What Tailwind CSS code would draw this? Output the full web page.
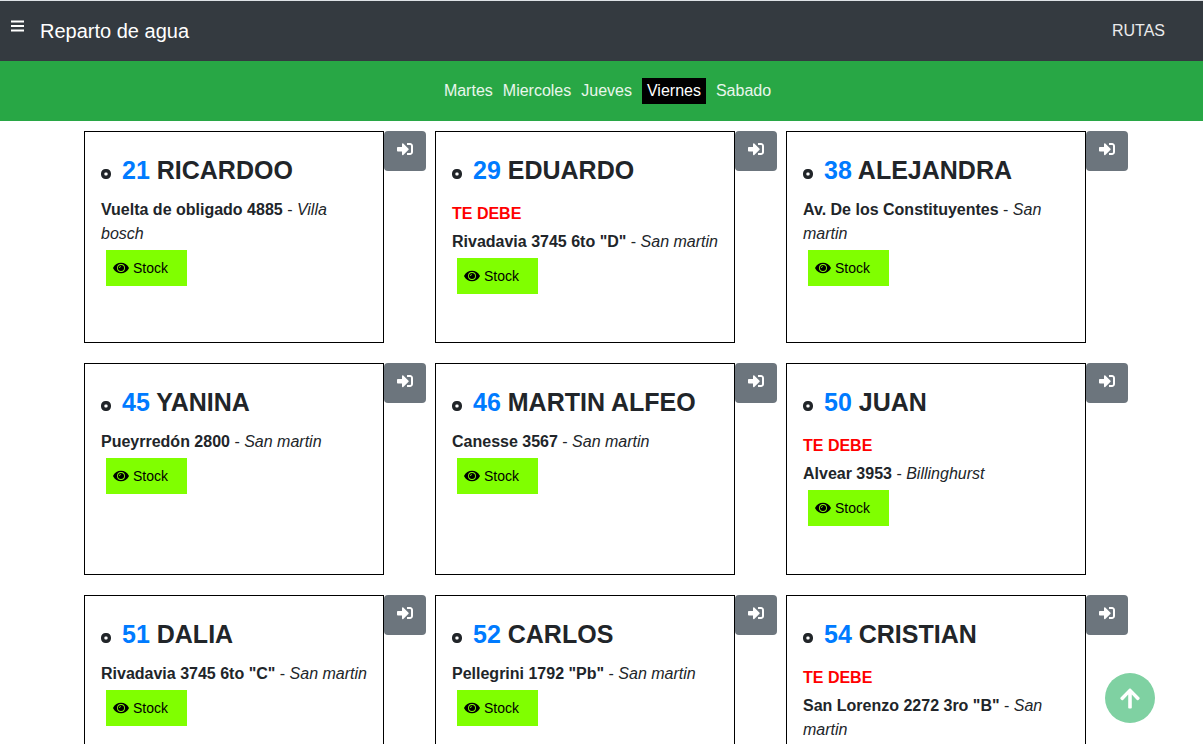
<!DOCTYPE html>
<html lang="es">
<head>
<meta charset="utf-8">
<meta name="viewport" content="width=device-width, initial-scale=1">
<title>Reparto de agua</title>
<script src="https://cdn.jsdelivr.net/npm/@tailwindcss/browser@4"></script>
</head>
<body class="bg-white font-['Liberation_Sans',Arial,sans-serif] text-base text-[#212529]">
<svg class="hidden" aria-hidden="true">
  <symbol id="enter" viewBox="0 0 512 512"><path d="M416 448h-84c-6.6 0-12-5.4-12-12v-40c0-6.6 5.4-12 12-12h84c17.7 0 32-14.3 32-32V160c0-17.7-14.3-32-32-32h-84c-6.6 0-12-5.4-12-12V76c0-6.6 5.4-12 12-12h84c53 0 96 43 96 96v192c0 53-43 96-96 96zm-47-201L201 79c-15-15-41-4.5-41 17v96H24c-13.3 0-24 10.7-24 24v96c0 13.3 10.7 24 24 24h136v96c0 21.5 26 32 41 17l168-168c9.3-9.4 9.3-24.6 0-34z"/></symbol>
  <symbol id="eye" viewBox="0 0 576 512"><path fill-rule="evenodd" d="M572.5 241.4C518.3 135.600 410.900 64 288 64S57.700 135.600 3.500 241.400a32 32 0 0 0 0 29.200C57.700 376.400 165 448 288 448s230.300-71.600 284.500-177.400a32 32 0 0 0 0-29.200zM288 400a144 144 0 1 1 0-288 144 144 0 0 1 0 288zm0-32a112 112 0 1 0 0-224 112 112 0 0 0 0 224zm-72-108a72 72 0 0 1 72-72v30a42 42 0 0 0-42 42z"/></symbol>
  <symbol id="dot" viewBox="0 0 10 10"><rect x="1.700" y="1.700" width="6.600" height="6.600" rx="2.800" fill="none" stroke="currentColor" stroke-width="3.400"/></symbol>
</svg>
<header class="flex h-[61px] items-center border-t border-[#dee2e6] bg-[#343a40] pr-[38px] pl-[11px] text-white">
  <button type="button" aria-label="Menú" class="mr-4 mb-[10px]">
    <svg class="block h-3 w-[13px]" viewBox="0 0 13 12" fill="none" stroke="currentColor" stroke-width="2"><path d="M0 1.500h13M0 6h13M0 10.500h13"/></svg>
  </button>
  <a href="#" class="text-xl">Reparto de agua</a>
  <a href="#rutas" class="ml-auto text-white/90">RUTAS</a>
</header>
<nav aria-label="Días" class="flex h-[60px] items-center justify-center bg-[#28a745] pl-3 text-white/90">
  <a href="#martes" class="px-[5px]">Martes</a>
  <a href="#miercoles" class="px-[5px]">Miercoles</a>
  <a href="#jueves" class="px-[5px]">Jueves</a>
  <a href="#viernes" aria-current="page" class="mx-[5px] bg-black px-[5px] py-px text-white">Viernes</a>
  <a href="#sabado" class="px-[5px]">Sabado</a>
</nav>
<main id="clients" class="flex flex-wrap justify-center gap-x-[9px] gap-y-5 pt-[10px] pb-5 pl-[9px]"></main>
<a href="#" aria-label="Volver arriba" class="fixed right-12 bottom-[21px] flex size-[50px] items-center justify-center rounded-full bg-[#7fd1a2] text-white">
  <svg class="h-[23px] w-5" viewBox="0 0 448 512" fill="currentColor"><path d="M34.9 289.5l-22.2-22.2c-9.4-9.4-9.4-24.6 0-33.9L207 39c9.4-9.4 24.6-9.4 33.9 0l194.3 194.3c9.4 9.4 9.4 24.6 0 33.9L413 289.4c-9.5 9.5-25 9.3-34.3-.4L264 168.6V456c0 13.3-10.7 24-24 24h-32c-13.3 0-24-10.7-24-24V168.6L69.2 289.1c-9.3 9.8-24.8 10-34.3.4z"/></svg>
</a>
<script>
  const clients = [
    [21, 'RICARDOO', 'Vuelta de obligado 4885', 'Villa bosch', false],
    [29, 'EDUARDO', 'Rivadavia 3745 6to "D"', 'San martin', true],
    [38, 'ALEJANDRA', 'Av. De los Constituyentes', 'San martin', false],
    [45, 'YANINA', 'Pueyrredón 2800', 'San martin', false],
    [46, 'MARTIN ALFEO', 'Canesse 3567', 'San martin', false],
    [50, 'JUAN', 'Alvear 3953', 'Billinghurst', true],
    [51, 'DALIA', 'Rivadavia 3745 6to "C"', 'San martin', false],
    [52, 'CARLOS', 'Pellegrini 1792 "Pb"', 'San martin', false],
    [54, 'CRISTIAN', 'San Lorenzo 2272 3ro "B"', 'San martin', true],
  ];
  document.getElementById('clients').innerHTML = clients.map(([id, name, street, town, owes]) => `
    <article class="flex items-start">
      <div class="min-h-[212px] w-[300px] border border-black px-4 pt-[22px] pb-4">
        <h2 class="flex items-baseline text-[25px] leading-8 font-bold">
          <svg class="mr-[11px] size-[10px]" aria-hidden="true"><use href="#dot"/></svg>
          <span><a href="#cliente-${id}" class="text-[#007bff]">${id}</a> ${name}</span>
        </h2>
        ${owes ? '<p class="mt-4 -mb-2 leading-6 font-bold text-[red]">TE DEBE</p>' : ''}
        <p class="mt-3 leading-6"><b>${street}</b> - <i>${town}</i></p>
        <button type="button" class="mt-1 ml-[5px] flex h-9 w-[81px] items-center gap-1 bg-[#80ff00] pl-[7px] text-sm text-black">
          <svg class="h-[14px] w-4" fill="currentColor" aria-hidden="true"><use href="#eye"/></svg>Stock
        </button>
      </div>
      <button type="button" aria-label="Entrar a ${name}" class="flex h-10 w-[42px] justify-center rounded bg-[#6c757d] pt-[10px] text-white">
        <svg class="size-4" fill="currentColor" aria-hidden="true"><use href="#enter"/></svg>
      </button>
    </article>`).join('');
</script>
</body>
</html>
